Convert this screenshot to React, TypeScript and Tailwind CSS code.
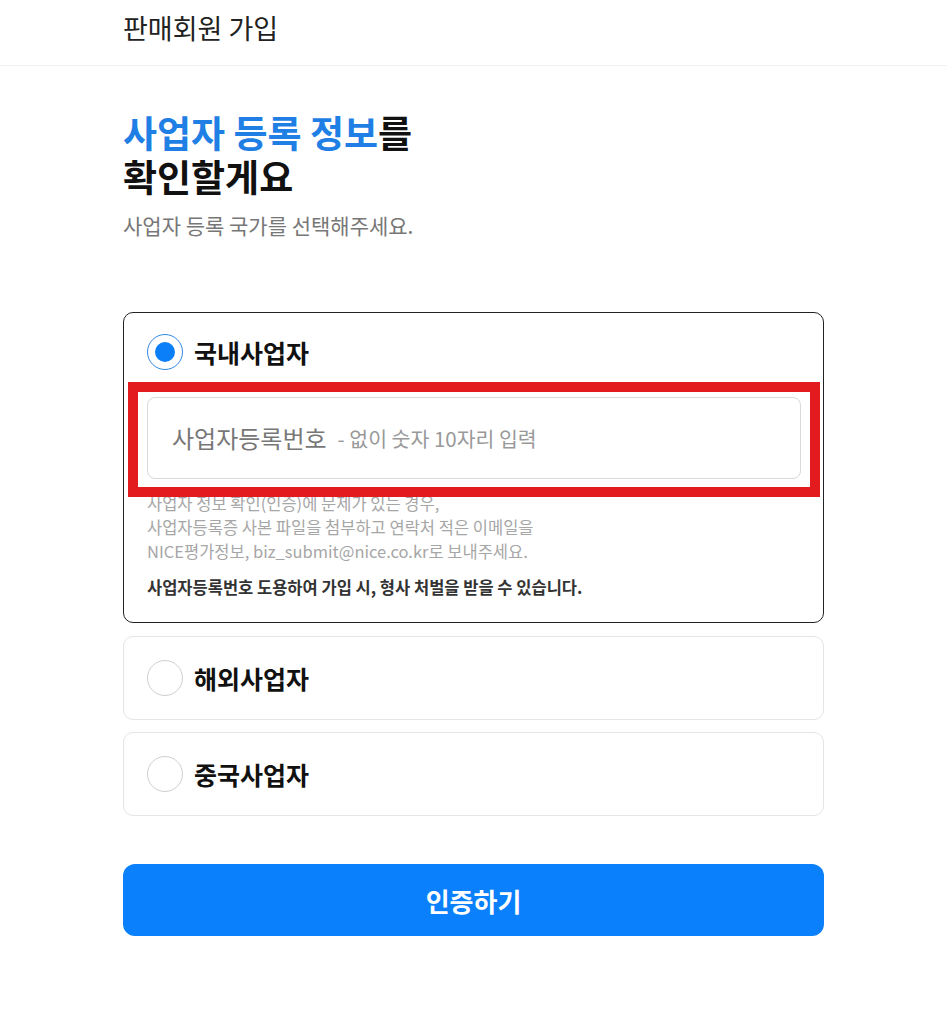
import { useState } from 'react';

const FONT = '"Noto Sans CJK KR", "Noto Sans", sans-serif';

type Kind = 'domestic' | 'overseas' | 'china';

function Radio({ checked }: { checked: boolean }) {
  return checked ? (
    <span className="flex h-9 w-9 shrink-0 items-center justify-center rounded-full border border-[#2f86e6] bg-white">
      <span className="h-5 w-5 rounded-full bg-[#0b7ff7]" />
    </span>
  ) : (
    <span className="h-9 w-9 shrink-0 rounded-full border border-[#cfcfcf] bg-white" />
  );
}

export default function App() {
  const [kind, setKind] = useState<Kind>('domestic');

  return (
    <div className="min-h-screen bg-white text-[#111]" style={{ fontFamily: FONT }}>
      {/* 헤더 */}
      <header className="h-[66px] border-b border-[#f2f2f2] pl-[123px] pt-[10px]">
        <h1 className="text-[27px] leading-[36px] text-[#222]">판매회원 가입</h1>
      </header>

      <main className="w-[701px] ml-[123px]">
        <h2 className="mt-[44px] text-[37px] font-bold leading-[44px] text-[#111]">
          <span className="font-semibold text-[#1f7fe4]">사업자 등록 정보</span>를
          <br />
          확인할게요
        </h2>
        <p className="mt-[15px] text-[21px] leading-[24px] text-[#777]">사업자 등록 국가를 선택해주세요.</p>

        {/* 국내사업자 */}
        <div
          className={`relative mt-[75px] rounded-[10px] border ${kind === 'domestic' ? 'border-[#222]' : 'border-[#e5e5e5]'} pl-[23px] pr-[22px] pt-[21px] pb-[23px]`}
        >
          <button type="button" onClick={() => setKind('domestic')} className="flex items-center gap-[11px]">
            <Radio checked={kind === 'domestic'} />
            <span className="text-[25px] font-semibold leading-[36px] text-[#111]">국내사업자</span>
          </button>

          <div className="mt-[27px] flex h-[82px] items-center rounded-[8px] border border-[#d9d9d9] pl-[24px]">
            <span className="text-[24px] text-[#777]">사업자등록번호</span>
            <span className="ml-[11px] text-[20.5px] text-[#999]">- 없이 숫자 10자리 입력</span>
          </div>

          <div className="mt-[12px] text-[16.5px] leading-[24px] text-[#a6a6a6]">
            <p>사업자 정보 확인(인증)에 문제가 있는 경우,</p>
            <p>사업자등록증 사본 파일을 첨부하고 연락처 적은 이메일을</p>
            <p>NICE평가정보, biz_submit@nice.co.kr로 보내주세요.</p>
          </div>
          <p className="mt-[12px] text-[16.5px] font-bold leading-[24px] text-[#333]">
            사업자등록번호 도용하여 가입 시, 형사 처벌을 받을 수 있습니다.
          </p>

          {/* 강조 표시 */}
          <div className="pointer-events-none absolute left-[4px] top-[69px] h-[115px] w-[692px] border-[10px] border-[#e31b1f]" />
        </div>

        {/* 해외사업자 */}
        <button
          type="button"
          onClick={() => setKind('overseas')}
          className="mt-[13px] flex h-[84px] w-full items-center gap-[11px] rounded-[10px] border border-[#e5e5e5] pl-[23px]"
        >
          <Radio checked={kind === 'overseas'} />
          <span className="text-[25px] font-semibold leading-[36px] text-[#111]">해외사업자</span>
        </button>

        {/* 중국사업자 */}
        <button
          type="button"
          onClick={() => setKind('china')}
          className="mt-[12px] flex h-[84px] w-full items-center gap-[11px] rounded-[10px] border border-[#e5e5e5] pl-[23px]"
        >
          <Radio checked={kind === 'china'} />
          <span className="text-[25px] font-semibold leading-[36px] text-[#111]">중국사업자</span>
        </button>

        <button
          type="button"
          className="mt-[48px] flex h-[72px] w-full items-center justify-center rounded-[12px] bg-[#0a80fc] text-[26px] font-bold text-white"
        >
          인증하기
        </button>
      </main>
    </div>
  );
}
